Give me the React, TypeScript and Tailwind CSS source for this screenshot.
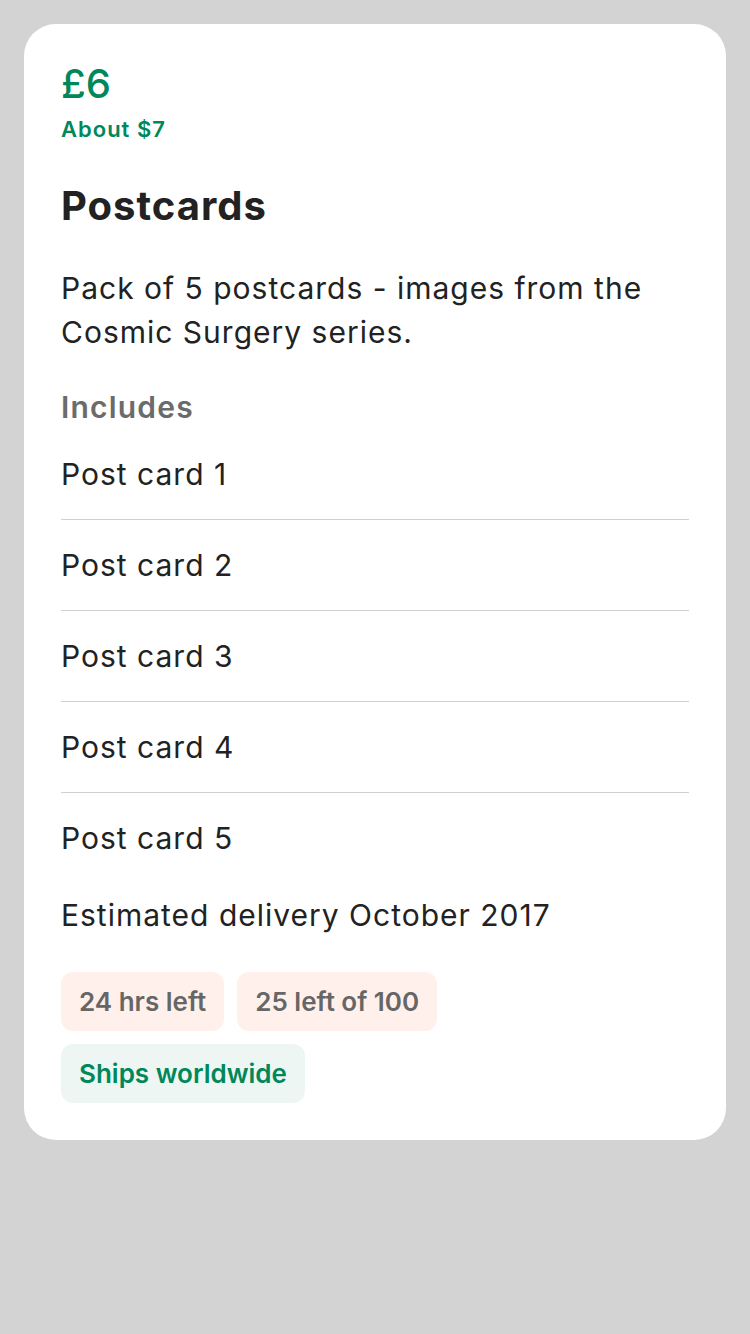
const items = ['Post card 1', 'Post card 2', 'Post card 3', 'Post card 4', 'Post card 5'];

export default function App() {
  return (
    <div
      className="min-h-[1334px] w-[750px] bg-[#d3d3d3] pt-6 px-6"
      style={{ fontFamily: 'Inter, "Noto Sans", sans-serif' }}
    >
      <div className="bg-white rounded-[32px] px-[37px] pt-[36px] pb-[37px] text-[#222222]">
        <div className="text-[40px] leading-[48px] font-medium text-[#00875a]">£6</div>
        <div className="mt-[7px] text-[22px] leading-[28px] font-semibold tracking-[1px] text-[#00875a]">About $7</div>

        <h1 className="mt-[39px] text-[40px] leading-[48px] font-bold tracking-[1px]">Postcards</h1>

        <p className="mt-[36px] text-[30px] leading-[44px] tracking-[1px]">
          Pack of 5 postcards - images from the Cosmic Surgery series.
        </p>

        <div className="mt-[31px] text-[30px] leading-[44px] font-semibold tracking-[1.2px] text-[#6b6b6b]">Includes</div>

        <ul>
          {items.map((item, i) => (
            <li
              key={item}
              className={
                'py-[23px] text-[30px] leading-[44px] tracking-[1px] ' +
                (i < items.length - 1 ? 'border-b border-[#d0d0d0]' : '')
              }
            >
              {item}
            </li>
          ))}
        </ul>

        <div className="mt-[10px] text-[30px] leading-[44px] tracking-[1px]">Estimated delivery October 2017</div>

        <div className="mt-[35px] flex flex-wrap gap-[13px] w-[420px]">
          <span className="h-[59px] flex items-center px-[18px] rounded-[12px] bg-[#fff0eb] text-[#666666] text-[26px] font-semibold">
            24 hrs left
          </span>
          <span className="h-[59px] flex items-center px-[18px] rounded-[12px] bg-[#fff0eb] text-[#666666] text-[26px] font-semibold">
            25 left of 100
          </span>
          <span className="h-[59px] flex items-center px-[18px] rounded-[12px] bg-[#eef6f3] text-[#00875a] text-[26px] font-semibold">
            Ships worldwide
          </span>
        </div>
      </div>
    </div>
  );
}
